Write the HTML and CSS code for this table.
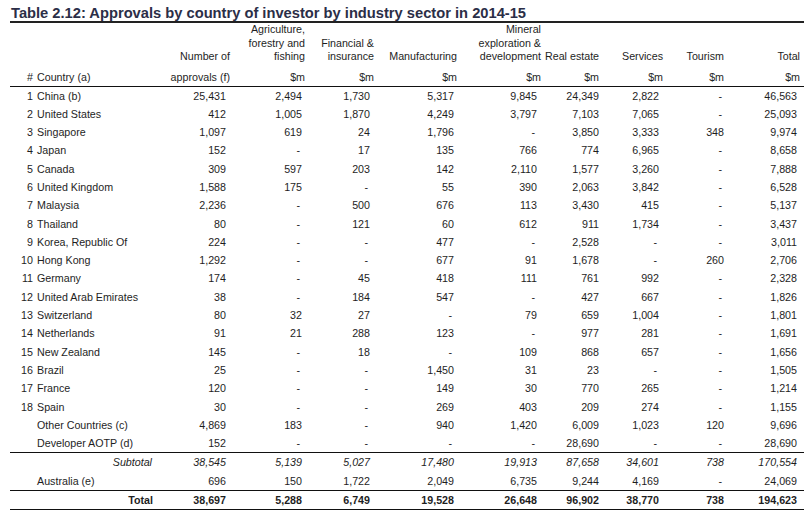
FILE: index.html
```html
<!DOCTYPE html>
<html lang="en">
<head>
<meta charset="utf-8">
<title>Table 2.12</title>
<link rel="stylesheet" href="styles.css">
</head>
<body>
<div class="page">
  <h1 class="title">Table 2.12: Approvals by country of investor by industry sector in 2014-15</h1>
  <table class="grid">
    <colgroup>
      <col class="c-no"><col class="c-country"><col class="c-appr"><col class="c-agri"><col class="c-fin"><col class="c-man"><col class="c-min"><col class="c-re"><col class="c-serv"><col class="c-tour"><col class="c-tot">
    </colgroup>
    <thead>
      <tr class="labels">
        <th></th><th></th>
        <th>Number of</th>
        <th>Agriculture,<br>forestry and<br>fishing</th>
        <th>Financial &amp;<br>insurance</th>
        <th>Manufacturing</th>
        <th>Mineral<br>exploration &amp;<br>development</th>
        <th class="re-label">Real estate</th>
        <th>Services</th>
        <th>Tourism</th>
        <th>Total</th>
      </tr>
      <tr class="units">
        <th>#</th><th class="country-h">Country (a)</th>
        <th>approvals (f)</th>
        <th>$m</th><th>$m</th><th>$m</th><th>$m</th><th>$m</th><th>$m</th><th>$m</th><th>$m</th>
      </tr>
    </thead>
    <tbody>
      <tr><td>1</td><td>China (b)</td><td>25,431</td><td>2,494</td><td>1,730</td><td>5,317</td><td>9,845</td><td>24,349</td><td>2,822</td><td class="d">-</td><td>46,563</td></tr>
      <tr><td>2</td><td>United States</td><td>412</td><td>1,005</td><td>1,870</td><td>4,249</td><td>3,797</td><td>7,103</td><td>7,065</td><td class="d">-</td><td>25,093</td></tr>
      <tr><td>3</td><td>Singapore</td><td>1,097</td><td>619</td><td>24</td><td>1,796</td><td class="d">-</td><td>3,850</td><td>3,333</td><td>348</td><td>9,974</td></tr>
      <tr><td>4</td><td>Japan</td><td>152</td><td class="d">-</td><td>17</td><td>135</td><td>766</td><td>774</td><td>6,965</td><td class="d">-</td><td>8,658</td></tr>
      <tr><td>5</td><td>Canada</td><td>309</td><td>597</td><td>203</td><td>142</td><td>2,110</td><td>1,577</td><td>3,260</td><td class="d">-</td><td>7,888</td></tr>
      <tr><td>6</td><td>United Kingdom</td><td>1,588</td><td>175</td><td class="d">-</td><td>55</td><td>390</td><td>2,063</td><td>3,842</td><td class="d">-</td><td>6,528</td></tr>
      <tr><td>7</td><td>Malaysia</td><td>2,236</td><td class="d">-</td><td>500</td><td>676</td><td>113</td><td>3,430</td><td>415</td><td class="d">-</td><td>5,137</td></tr>
      <tr><td>8</td><td>Thailand</td><td>80</td><td class="d">-</td><td>121</td><td>60</td><td>612</td><td>911</td><td>1,734</td><td class="d">-</td><td>3,437</td></tr>
      <tr><td>9</td><td>Korea, Republic Of</td><td>224</td><td class="d">-</td><td class="d">-</td><td>477</td><td class="d">-</td><td>2,528</td><td class="d">-</td><td class="d">-</td><td>3,011</td></tr>
      <tr><td>10</td><td>Hong Kong</td><td>1,292</td><td class="d">-</td><td class="d">-</td><td>677</td><td>91</td><td>1,678</td><td class="d">-</td><td>260</td><td>2,706</td></tr>
      <tr><td>11</td><td>Germany</td><td>174</td><td class="d">-</td><td>45</td><td>418</td><td>111</td><td>761</td><td>992</td><td class="d">-</td><td>2,328</td></tr>
      <tr><td>12</td><td>United Arab Emirates</td><td>38</td><td class="d">-</td><td>184</td><td>547</td><td class="d">-</td><td>427</td><td>667</td><td class="d">-</td><td>1,826</td></tr>
      <tr><td>13</td><td>Switzerland</td><td>80</td><td>32</td><td>27</td><td class="d">-</td><td>79</td><td>659</td><td>1,004</td><td class="d">-</td><td>1,801</td></tr>
      <tr><td>14</td><td>Netherlands</td><td>91</td><td>21</td><td>288</td><td>123</td><td class="d">-</td><td>977</td><td>281</td><td class="d">-</td><td>1,691</td></tr>
      <tr><td>15</td><td>New Zealand</td><td>145</td><td class="d">-</td><td>18</td><td class="d">-</td><td>109</td><td>868</td><td>657</td><td class="d">-</td><td>1,656</td></tr>
      <tr><td>16</td><td>Brazil</td><td>25</td><td class="d">-</td><td class="d">-</td><td>1,450</td><td>31</td><td>23</td><td class="d">-</td><td class="d">-</td><td>1,505</td></tr>
      <tr><td>17</td><td>France</td><td>120</td><td class="d">-</td><td class="d">-</td><td>149</td><td>30</td><td>770</td><td>265</td><td class="d">-</td><td>1,214</td></tr>
      <tr><td>18</td><td>Spain</td><td>30</td><td class="d">-</td><td class="d">-</td><td>269</td><td>403</td><td>209</td><td>274</td><td class="d">-</td><td>1,155</td></tr>
      <tr><td></td><td>Other Countries (c)</td><td>4,869</td><td>183</td><td class="d">-</td><td>940</td><td>1,420</td><td>6,009</td><td>1,023</td><td>120</td><td>9,696</td></tr>
      <tr><td></td><td>Developer AOTP (d)</td><td>152</td><td class="d">-</td><td class="d">-</td><td class="d">-</td><td class="d">-</td><td>28,690</td><td class="d">-</td><td class="d">-</td><td>28,690</td></tr>
    </tbody>
    <tbody class="summary">
      <tr class="subtotal"><td></td><td class="label">Subtotal</td><td>38,545</td><td>5,139</td><td>5,027</td><td>17,480</td><td>19,913</td><td>87,658</td><td>34,601</td><td>738</td><td>170,554</td></tr>
      <tr><td></td><td>Australia (e)</td><td>696</td><td>150</td><td>1,722</td><td>2,049</td><td>6,735</td><td>9,244</td><td>4,169</td><td class="d">-</td><td>24,069</td></tr>
      <tr class="total"><td></td><td class="label">Total</td><td>38,697</td><td>5,288</td><td>6,749</td><td>19,528</td><td>26,648</td><td>96,902</td><td>38,770</td><td>738</td><td>194,623</td></tr>
    </tbody>
  </table>
</div>
</body>
</html>
```

FILE: styles.css
```css
html, body {
  margin: 0;
  padding: 0;
  background: #ffffff;
}

.page {
  width: 794px;
  margin-left: 10px;
  font-family: "Liberation Sans", Arial, sans-serif;
  color: #1e1e1e;
}

.title {
  margin: 0;
  padding: 5px 0 0 1px;
  font-size: 14.7px;
  line-height: 16px;
  font-weight: bold;
  color: #2b2e47;
  border-bottom: 2px solid #222222;
  white-space: nowrap;
}

.grid {
  width: 794px;
  table-layout: fixed;
  border-collapse: separate;
  border-spacing: 0;
  font-size: 10.7px;
}

.c-no { width: 25px; }
.c-country { width: 125px; }
.c-appr { width: 70px; }
.c-agri { width: 75px; }
.c-fin { width: 69px; }
.c-man { width: 83px; }
.c-min { width: 84px; }
.c-re { width: 58px; }
.c-serv { width: 64px; }
.c-tour { width: 61px; }
.c-tot { width: 80px; }

.grid th,
.grid td {
  padding: 0;
  font-weight: normal;
  text-align: right;
  white-space: nowrap;
}

.labels th {
  height: 40px;
  padding-bottom: 4px;
  line-height: 13.5px;
  vertical-align: bottom;
}

.units th {
  line-height: 18px;
  border-bottom: 1px solid #111111;
}

.grid th:first-child,
.grid td:first-child {
  padding-right: 2px;
}

.grid .country-h,
.grid td:nth-child(2) {
  text-align: left;
  padding-left: 2px;
}

.grid th:last-child {
  padding-right: 4px;
}

.grid .re-label {
  text-align: left;
  padding-left: 4px;
  overflow: visible;
}

.grid td {
  line-height: 18.3px;
}

.grid td:nth-child(n+3) {
  padding-right: 4px;
}

.grid td:nth-child(4),
.grid td:nth-child(6) {
  padding-right: 3px;
}

.grid td:nth-child(8),
.grid td:nth-child(10) {
  padding-right: 0;
}

.grid td:nth-child(11) {
  padding-right: 7px;
}

.grid td.d::after {
  content: "";
  display: inline-block;
  width: 2px;
}

.summary .subtotal td {
  border-top: 1px solid #111111;
  font-style: italic;
}

.grid .subtotal td.label {
  text-align: right;
  padding-right: 8px;
}

.summary .total td {
  border-top: 1px solid #111111;
  border-bottom: 1px solid #111111;
  font-weight: bold;
}

.grid .total td.label {
  text-align: right;
  padding-right: 7px;
}
```
